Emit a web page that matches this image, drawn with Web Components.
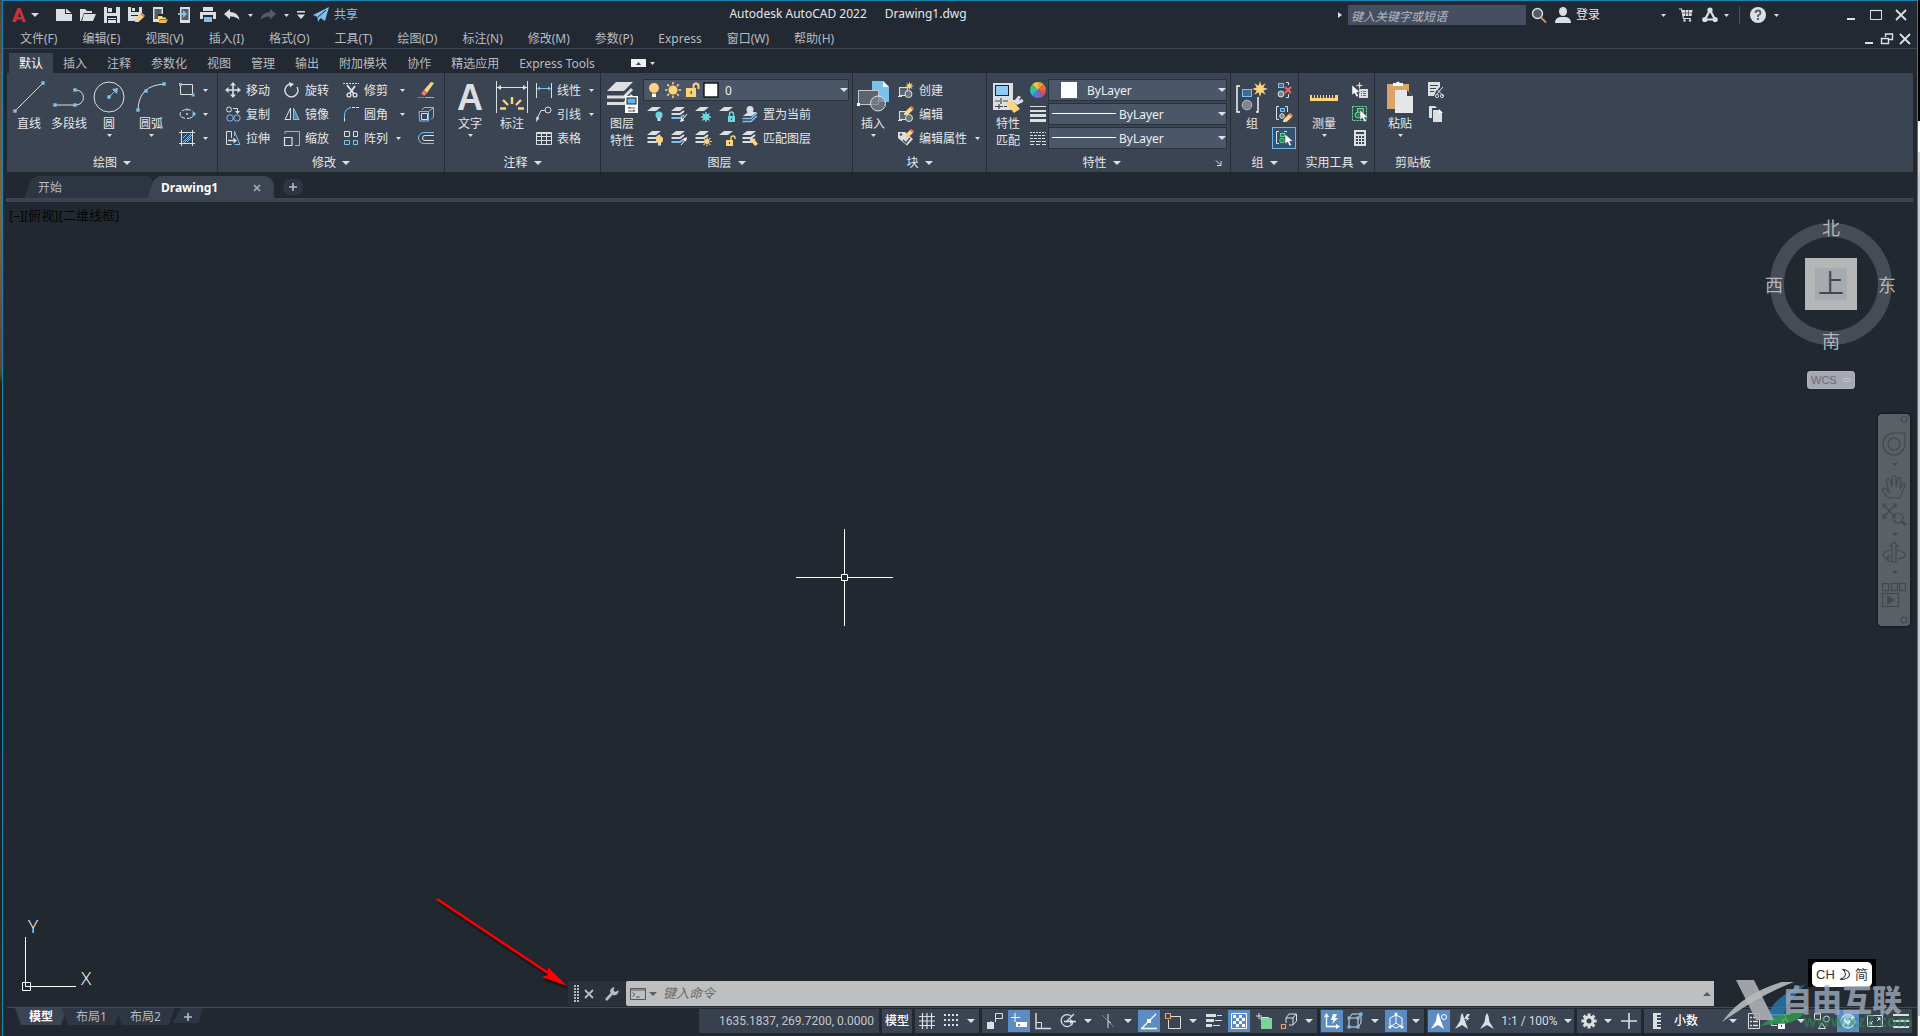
<!DOCTYPE html>
<html lang="zh-CN">
<head>
<meta charset="utf-8">
<title>Autodesk AutoCAD 2022 - Drawing1.dwg</title>
<style>
  html, body { height: 100%; }
  body {
    margin: 0; overflow: hidden; display: grid; grid-template-columns: 2px 1fr 2px;
    font: 12px/16px "Noto Sans", "Noto Sans CJK SC", sans-serif; color: #d3d7da; background: #0c0f13;
  }
  .edge-l { background: linear-gradient(#51463f 0, #6d5445 8%, #8a6040 20%, #5c4230 36%, #2c2119 37%, #14181c 60%, #2b2a24 100%); }
  .edge-r { background: linear-gradient(#000 0 121px, #fff 121px 152px, #d4d4d6 152px 172px, #c5cad3 172px 1016px, #fff 1016px); }
</style>
</head>
<body>
<div class="edge-l"></div>
<cad-app>
  <title-bar></title-bar>
  <menu-bar></menu-bar>
  <ribbon-tabs></ribbon-tabs>
  <cad-ribbon>
    <ribbon-panel label="绘图" caret style="--pad:2px">
      <tool-button icon="line">直线</tool-button>
      <tool-button icon="pline">多段线</tool-button>
      <tool-button icon="circle" caret>圆</tool-button>
      <tool-button icon="arc" caret style="--w:44px">圆弧</tool-button>
      <tool-column style="--w:44px;--pl:6px">
        <mini-button icon="rect" name="矩形" caret></mini-button>
        <mini-button icon="ellipse" name="椭圆" caret></mini-button>
        <mini-button icon="hatch" name="图案填充" caret></mini-button>
      </tool-column>
    </ribbon-panel>
    <ribbon-panel label="修改" caret style="--pad:7px">
      <tool-column style="--w:59px">
        <mini-button icon="move">移动</mini-button>
        <mini-button icon="copy">复制</mini-button>
        <mini-button icon="stretch">拉伸</mini-button>
      </tool-column>
      <tool-column style="--w:59px">
        <mini-button icon="rotate">旋转</mini-button>
        <mini-button icon="mirror">镜像</mini-button>
        <mini-button icon="scale">缩放</mini-button>
      </tool-column>
      <tool-column style="--w:75px">
        <mini-button icon="trim" caret style="--cg:12px">修剪</mini-button>
        <mini-button icon="fillet" caret style="--cg:12px">圆角</mini-button>
        <mini-button icon="array" caret>阵列</mini-button>
      </tool-column>
      <tool-column style="--w:26px">
        <mini-button icon="erase" name="删除"></mini-button>
        <mini-button icon="explode" name="分解"></mini-button>
        <mini-button icon="offset" name="偏移"></mini-button>
      </tool-column>
    </ribbon-panel>
    <ribbon-panel label="注释" caret style="--pad:4px">
      <tool-button icon="text" caret style="--w:42px">文字</tool-button>
      <tool-button icon="dim" style="--w:42px">标注</tool-button>
      <tool-column style="--w:67px;--pl:3px">
        <mini-button icon="linear" caret>线性</mini-button>
        <mini-button icon="leader" caret>引线</mini-button>
        <mini-button icon="table">表格</mini-button>
      </tool-column>
    </ribbon-panel>
    <ribbon-panel label="图层" caret style="--pad:1px">
      <tool-button icon="layers" >图层<br>特性</tool-button>
      <tool-column style="--w:210px;--pl:1px">
        <combo-box name="图层" value="0" style="--w:206px;--ind:2px;--tg:6px">
          <cad-icon name="bulb"></cad-icon><cad-icon name="sun"></cad-icon><cad-icon name="unlock"></cad-icon><cad-icon name="swatch"></cad-icon>
        </combo-box>
        <tool-row>
          <mini-button icon="lyoff" name="关" box></mini-button>
          <mini-button icon="lyiso" name="隔离" box></mini-button>
          <mini-button icon="lyfrz" name="冻结" box></mini-button>
          <mini-button icon="lylck" name="锁定" box></mini-button>
          <mini-button icon="lycur" style="--ml:3px">置为当前</mini-button>
        </tool-row>
        <tool-row>
          <mini-button icon="lyon" name="打开所有图层" box></mini-button>
          <mini-button icon="lyuni" name="取消隔离" box></mini-button>
          <mini-button icon="lythw" name="解冻所有图层" box></mini-button>
          <mini-button icon="lyulk" name="解锁" box></mini-button>
          <mini-button icon="lymch" style="--ml:3px">匹配图层</mini-button>
        </tool-row>
      </tool-column>
    </ribbon-panel>
    <ribbon-panel label="块" caret style="--pad:0px">
      <tool-button icon="insert" caret>插入</tool-button>
      <tool-column style="--w:93px;--pl:5px">
        <mini-button icon="bcreate">创建</mini-button>
        <mini-button icon="bedit">编辑</mini-button>
        <mini-button icon="battr" caret>编辑属性</mini-button>
      </tool-column>
    </ribbon-panel>
    <ribbon-panel label="特性" caret launcher style="--pad:1px">
      <tool-button icon="match">特性<br>匹配</tool-button>
      <tool-column style="--w:20px;--pl:2px">
        <mini-button icon="wheel" name="对象颜色"></mini-button>
        <mini-button icon="lweights" name="线宽"></mini-button>
        <mini-button icon="ltypes" name="线型"></mini-button>
      </tool-column>
      <tool-column style="--w:182px">
        <combo-box name="颜色" value="ByLayer" style="--w:179px;--ind:12px;--tg:10px"><cad-icon name="white"></cad-icon></combo-box>
        <combo-box name="线宽" value="ByLayer" style="--w:179px;--ind:3px;--tg:3px"><cad-icon name="sample"></cad-icon></combo-box>
        <combo-box name="线型" value="ByLayer" style="--w:179px;--ind:3px;--tg:3px"><cad-icon name="sample"></cad-icon></combo-box>
      </tool-column>
    </ribbon-panel>
    <ribbon-panel label="组" caret style="--pad:1px">
      <tool-button icon="group">组</tool-button>
      <tool-column style="--w:26px">
        <mini-button icon="ungroup" name="解除编组" box></mini-button>
        <mini-button icon="gedit" name="组编辑" box></mini-button>
        <mini-button icon="gsel" name="启用/禁用组选择" box active></mini-button>
      </tool-column>
    </ribbon-panel>
    <ribbon-panel label="实用工具" caret style="--pad:4px">
      <tool-button icon="ruler" caret style="--w:42px">测量</tool-button>
      <tool-column style="--w:29px;--pl:7px">
        <mini-button icon="qselect" name="快速选择"></mini-button>
        <mini-button icon="selall" name="全部选择"></mini-button>
        <mini-button icon="calc" name="快速计算器"></mini-button>
      </tool-column>
    </ribbon-panel>
    <ribbon-panel label="剪贴板" last style="--pad:4px">
      <tool-button icon="paste" caret style="--w:42px">粘贴</tool-button>
      <tool-column style="--w:30px;--pl:7px">
        <mini-button icon="cut" name="剪切"></mini-button>
        <mini-button icon="copyclip" name="复制裁剪"></mini-button>
      </tool-column>
    </ribbon-panel>
  </cad-ribbon>
  <file-tabs></file-tabs>
  <drawing-area></drawing-area>
  <footer-bar><layout-tabs></layout-tabs><status-bar></status-bar></footer-bar>
  <site-mark></site-mark>
</cad-app>
<div class="edge-r"></div>

<script>
const W = '#dcdfe1', B = '#7cc0ee', Y = '#fdd37c', D = '#3b4453', G = '#7d8590', T = '#6fd8df';
const sq = (x, y, s = 3, c = B) => `<rect x="${x - s / 2}" y="${y - s / 2}" width="${s}" height="${s}" fill="${c}"/>`;
const ln = (d, c = W, w = 1, x = '') => `<path d="${d}" fill="none" stroke="${c}" stroke-width="${w}" ${x}/>`;
const fl = (d, c = W, x = '') => `<path d="${d}" fill="${c}" ${x}/>`;
const sheet = (x, y, c = W) => fl(`M${x + 5} ${y}H${x + 14}L${x + 9} ${y + 4}H${x}Z`, c);
const stack = (c1 = W, c2 = W, c3 = W) => sheet(0, 1, c1) + ln('M0.5 8H9L13 5', c2, 2) + ln('M0.5 12H9L13 9', c3, 2);
const cursor = (x, y) => `<path transform="translate(${x} ${y})" d="M0 0V10L2.500 8L4.500 12L6.500 11L4.500 7.300H8Z" fill="#fff" stroke="${D}" stroke-width=".5"/>`;
const pencil = (x, y) => `<g transform="translate(${x} ${y})"><path d="M0 8L1 5L6 0L9 3L3.500 8Z" fill="${Y}"/><path d="M6 0L9 3L10 2Q9-.5 7-1Z" fill="#f0786e"/><path d="M0 8L1 5L3 7.500Z" fill="${W}"/></g>`;
const pie = (cx, cy, r, cols) => cols.map((c, i) => {
  const a = (i / cols.length) * 2 * Math.PI - Math.PI / 2, b = ((i + 1) / cols.length) * 2 * Math.PI - Math.PI / 2;
  return fl(`M${cx} ${cy}L${(cx + r * Math.cos(a)).toFixed(2)} ${(cy + r * Math.sin(a)).toFixed(2)}A${r} ${r} 0 0 1 ${(cx + r * Math.cos(b)).toFixed(2)} ${(cy + r * Math.sin(b)).toFixed(2)}Z`, c);
}).join('');
const rays = (cx, cy, r1, r2, n, c, w = 1) => ln(Array.from({ length: n }, (_, i) => {
  const a = i * 2 * Math.PI / n;
  return `M${(cx + r1 * Math.cos(a)).toFixed(2)} ${(cy + r1 * Math.sin(a)).toFixed(2)}L${(cx + r2 * Math.cos(a)).toFixed(2)} ${(cy + r2 * Math.sin(a)).toFixed(2)}`;
}).join(''), c, w);
const star = (cx, cy, R, r, n, c) => fl('M' + Array.from({ length: 2 * n }, (_, i) => {
  const a = i * Math.PI / n - Math.PI / 2, q = i % 2 ? r : R;
  return `${(cx + q * Math.cos(a)).toFixed(2)} ${(cy + q * Math.sin(a)).toFixed(2)}`;
}).join('L') + 'Z', c);
const padlock = (x, y, c, open) => `<rect x="${x}" y="${y}" width="7" height="6" fill="${c}"/>` + ln(open ? `M${x + 5} ${y}V${y - 2}A2 2 0 0 1 ${x + 9} ${y - 2}V${y - 1}` : `M${x + 1.5} ${y}V${y - 2}A2 2 0 0 1 ${x + 5.5} ${y - 2}V${y}`, c, 1.4) + `<rect x="${x + 3}" y="${y + 2}" width="1" height="2" fill="${D}"/>`;
const bulb = (x, y, c) => `<circle cx="${x}" cy="${y}" r="3.500" fill="${c}"/><rect x="${x - 1.5}" y="${y + 3}" width="3" height="3" fill="${W}"/>`;

const ICONS = {
  caret: [5, 3, fl('M0 0H5L2.500 3Z')],
  caret8: [8, 4, fl('M0 0H8L4 4Z')],
  caretup: [8, 4, fl('M0 4H8L4 0Z', '#5b5e61')],
  line: [32, 32, ln('M2 30L30 2') + sq(2, 30, 3.4) + sq(30, 2, 3.4)],
  pline: [32, 32, ln('M2 24H23A7.500 7.500 0 0 0 23 9') + sq(2, 24, 3.4) + sq(22, 24, 3.4) + sq(22, 9, 3.4)],
  circle: [32, 32, `<circle cx="16" cy="16" r="15" fill="none" stroke="${W}"/>` + ln('M16 16L24 8', B) + fl('M19 8L25 7L24 13Z', B) + sq(16, 16, 3.4)],
  arc: [32, 32, ln('M3 30Q3 4 30 3') + sq(3, 29, 3.4) + sq(11, 10, 3.4) + sq(29, 3, 3.4)],
  rect: [16, 16, ln('M1.500 2.500H13.500V12.500H1.500Z') + sq(1.5, 2.5) + sq(14, 13)],
  ellipse: [16, 16, `<ellipse cx="8" cy="8" rx="7" ry="4.500" fill="none" stroke="${W}" stroke-dasharray="9 2"/>` + sq(8, 8, 2) + sq(15, 8) + sq(8, 3.5, 2)],
  hatch: [16, 16, ln('M2.500 0V16M13.500 0V16M0 2.500H16M0 13.500H16') + ln('M4 8L8 4M4 12L12 4M8 12L12 8M5 13L13 5', B)],
  move: [16, 16, ln('M8 2V14M2 8H14', W, 1.6) + fl('M8 0L11 3.500H5ZM8 16L11 12.500H5ZM0 8L3.500 5V11ZM16 8L12.500 5V11Z')],
  copy: [16, 16, `<circle cx="4" cy="3.500" r="2.500" fill="none" stroke="${W}"/><circle cx="5" cy="12" r="3.200" fill="none" stroke="${B}"/><circle cx="12" cy="12" r="3.200" fill="none" stroke="${B}"/>` + ln('M8 2.500H12.500V6') + fl('M10 5H15L12.500 8Z')],
  stretch: [16, 16, ln('M6.500 14.500H1.500V1.500H6.500V8', W) + ln('M9.500 1.500L15 14.500H9.500', B) + ln('M3 10.500H10', W, 1.4) + fl('M8.500 7.500L12 10.500L8.500 13.500Z') + ln('M9.500 1V6', B)],
  rotate: [16, 16, ln('M6 2A6.500 6.500 0 1 0 13 5', W, 1.4) + fl('M5 0L10 2L6 5.500Z')],
  mirror: [16, 16, ln('M6.500 2V13.500H1Z') + fl('M9 1L15.500 14H9Z', '#4d84b0') + ln('M9.500 2L15 13.500H9.500Z', B)],
  scale: [16, 16, ln('M1 4V1.500H15.500V15.500H11', B) + ln('M.500 7.500H8V15.500H.500Z', W, 1.2)],
  trim: [16, 16, ln('M0 1.500H16', W, 1, 'stroke-dasharray="2 1"') + ln('M4 3L11 12M12 4L7 11', W, 2) + `<circle cx="6" cy="13" r="1.900" fill="none" stroke="${W}" stroke-width="1.400"/><circle cx="12" cy="13" r="1.900" fill="none" stroke="${W}" stroke-width="1.400"/>`],
  fillet: [16, 16, ln('M1.500 12V9Q1.500 3 8 1.500', B) + ln('M9 1.500H12M13 1.500H16M1.500 12V15.500')],
  array: [16, 16, ln('M1.500 1.500H6.500V6.500H1.500ZM10.500 1.500H14.500V6.500H10.500Z') + ln('M1.500 10.500H6.500V14.500H1.500ZM10.500 10.500H14.500V14.500H10.500Z', B)],
  erase: [16, 16, fl('M6 8L13 0L16 1L9 11Z', Y) + fl('M6 8L9 11L7 13.500Q4 14 3.500 11Z', '#f0786e') + ln('M0 15.500H6', '#e0604f') + ln('M7 15.500H16', B)],
  explode: [16, 16, ln('M1 5.500H10.500V15H1.500ZM4 4L6 1.500H15.500V11L13 13.500M11 5L15 2', B) + ln('M3.500 7.500H9.500V13.500H3.500Z')],
  offset: [16, 16, ln('M16 2.500H6A5.500 5.500 0 0 0 6 13.500H16', B) + ln('M16 5.500H7A2.500 2.500 0 0 0 7 10.500H16')],
  text: [32, 32, `<text x="16" y="29" text-anchor="middle" font-family="Liberation Sans, sans-serif" font-weight="700" font-size="36" fill="${W}">A</text>`],
  dim: [32, 32, ln('M.500 0V32M31.500 0V32M1 6.500H31') + fl('M1 6.500L5 4V9ZM31 6.500L27 4V9Z') + ln('M16 16V23M7 19L12 24M25 19L20 24M4 27.500H10M28 27.500H22', Y, 2.4)],
  linear: [16, 16, ln('M.500 1V16M15.500 1V16') + ln('M1 6.500H15', B) + fl('M1 6.500L4 4.500V8.500ZM15 6.500L12 4.500V8.500Z', B)],
  leader: [16, 16, `<circle cx="12" cy="4" r="3" fill="none" stroke="${W}"/>` + ln('M9 4.500H5L1 13') + fl('M0 16L.500 10.500L3.500 12Z')],
  table: [16, 16, ln('M.500 2.500H15.500V14.500H.500ZM.500 6.500H15.500M.500 10.500H15.500M5.500 3V14M10.500 3V14') + ln('M1 3.500H15', W, 1)],
  layers: [32, 32, fl('M10 1H27L18 10H1Z') + ln('M1 16H18L26 8', W, 3) + ln('M1 22.500H18L26 14', W, 3) + '<rect x="19" y="15" width="13" height="17" fill="#fff"/><rect x="21" y="17" width="9" height="6" fill="#5db4f5" stroke="#222"/>' + ln('M22 27H29M24 26L22 27M22 30H29M27 29L29 30', '#555')],
  bulb: [16, 16, `<circle cx="8" cy="6" r="5" fill="${Y}"/><rect x="6" y="10" width="4" height="3" fill="#e8a33c"/><rect x="6" y="12" width="4" height="3" fill="#fff"/>`],
  sun: [16, 16, `<circle cx="8" cy="8" r="4.500" fill="${Y}"/>` + rays(8, 8, 5.5, 8, 8, Y, 1.6)],
  unlock: [16, 16, `<rect x="2" y="6" width="10" height="9" fill="${Y}"/>` + ln('M9.500 6V4A2.500 2.500 0 0 1 14.500 4V7', Y, 2) + `<rect x="6.500" y="9" width="1.500" height="3" fill="#7a5a20"/>`],
  swatch: [16, 16, '<rect x="1" y="1" width="14" height="14" fill="#fff" stroke="#111" stroke-width="1.400"/>'],
  white: [16, 16, '<rect width="16" height="16" fill="#fff"/>'],
  sample: [64, 2, '<rect width="64" height="1" fill="#fff"/>'],
  lyoff: [16, 16, sheet(0, 1) + bulb(12, 9, T)],
  lyiso: [16, 16, stack(W, W, B) + ln('M16 8L11 14', '#fff') + fl('M9 16L10.500 11.500L13.500 14.500Z', '#fff')],
  lyfrz: [16, 16, sheet(0, 1) + rays(11, 11, 0, 5, 8, T, 1.3) + `<circle cx="11" cy="11" r="3" fill="none" stroke="${T}"/>`],
  lylck: [16, 16, sheet(0, 1) + padlock(9, 10, T)],
  lycur: [16, 16, sheet(1, 6, W) + ln('M.500 12.500H9L15 7', B, 1.6) + ln('M.500 15.500H9L15 10', B, 1.6) + `<circle cx="8" cy="3.500" r="3.500" fill="${W}"/>`],
  lyon: [16, 16, stack() + bulb(12.5, 9.5, Y)],
  lyuni: [16, 16, stack(W, W, B) + ln('M10 15L15 9', '#fff') + fl('M16 7L12 9L15 11.500Z', '#fff')],
  lythw: [16, 16, stack() + `<circle cx="12" cy="11.500" r="2.500" fill="${Y}"/>` + rays(12, 11.5, 3, 4.8, 8, Y, 1.2)],
  lyulk: [16, 16, sheet(0, 1) + padlock(7, 10, Y, 1)],
  lymch: [16, 16, stack() + fl('M8 10L12 9L16 14L13 16Z', Y) + fl('M7 8L9 7L12 9.500L9 11Z')],
  insert: [32, 32, fl('M15 0H26L32 6V21H15Z', B) + fl('M26 0V6H32Z', '#fff') + '<rect x="1.500" y="9.500" width="20" height="14" fill="#5c646f" stroke="#c3c7cb"/>' + '<circle cx="21" cy="22.500" r="7.500" fill="#7a828d" fill-opacity=".7" stroke="#dfe2e4"/>' + '<rect x="0" y="22" width="3" height="3" fill="#fff"/>'],
  bcreate: [16, 16, '<rect x="1.500" y="5.500" width="8" height="8" fill="#5c646f" stroke="#dcdfe1"/><circle cx="10.500" cy="12" r="3.500" fill="#6b737e" stroke="#dcdfe1"/>' + ln('M0 14.500H4') + star(11.5, 4, 4.5, 1.8, 8, Y)],
  bedit: [16, 16, '<rect x="1.500" y="5.500" width="8" height="8" fill="#5c646f" stroke="#dcdfe1"/><circle cx="11" cy="12" r="3.500" fill="#6b737e" stroke="#dcdfe1"/>' + ln('M0 14.500H4') + pencil(6, 1)],
  battr: [16, 16, fl('M0 2H7L15 9L9 15.500L0 8Z') + '<circle cx="3" cy="4.500" r="1.200" fill="#3b4453"/>' + ln('M5 10L8 13L12 8', D, 1.3) + pencil(6, 0)],
  match: [32, 32, '<rect x="1" y="2" width="20" height="27" fill="#dcdfe1"/><rect x="3.500" y="4.500" width="13" height="10" fill="#8ccbf8" stroke="#222"/>' + ln('M3 20H8M11 20H16M9 17V23M3 25.500H11M7 23V28M12 25.500H15', '#444', 1.2) + fl('M14 22L20 19L28 28L22 32Z', Y) + fl('M19 19L25 24L31 21Q32 18 29 18Q28 20 27 19L29 16Q28 15 26 15L23 19Z')],
  wheel: [16, 16, pie(8, 8, 8, ['#e8a13a', '#e86a3a', '#e0504a', '#8a5ad0', '#4a7be0', '#38b6c8', '#3fc46a', '#f2c53a'])],
  lweights: [16, 16, fl('M0 0H16V1H0ZM0 4H16V6H0ZM0 8H16V11H0ZM0 13H16V16H0Z')],
  ltypes: [16, 16, ln('M0 2.500H16', W, 1, 'stroke-dasharray="2 1"') + ln('M0 5.500H16M0 8.500H16', W, 1, 'stroke-dasharray="3 1"') + ln('M0 11.500H16', W, 1, 'stroke-dasharray="5 1"') + ln('M0 14.500H16', W, 1, 'stroke-dasharray="4 2"')],
  group: [32, 32, ln('M4 5H1V31H4M20 31H22V16', '#fff', 1.4) + '<rect x="6.500" y="8.500" width="9" height="7" fill="#3f6a92" stroke="#7cc0ee"/><circle cx="11" cy="24" r="4.800" fill="#7d8590" stroke="#b9bdc1"/>' + star(24, 8, 8, 3.6, 8, Y)],
  ungroup: [16, 16, '<rect x="2.500" y="1.500" width="5" height="4" fill="#3f6a92" stroke="#7cc0ee"/><circle cx="5" cy="12" r="3" fill="#7d8590" stroke="#dcdfe1"/>' + ln('M10 .500H12.500V3M12.500 12V15.500H10') + ln('M9 5L15 11M15 5L9 11', '#f0646a', 2)],
  gedit: [16, 16, ln('M3 .500H.500V13.500H3M9 .500H11.500V6') + '<rect x="4.500" y="2.500" width="4" height="3" fill="#3f6a92" stroke="#7cc0ee"/><circle cx="6" cy="10" r="2.300" fill="#7d8590" stroke="#dcdfe1"/>' + pencil(7, 8)],
  gsel: [16, 16, ln('M3 1.500H.500V13.500H3M8 1.500H11') + '<rect x="4.500" y="3.500" width="4" height="3" fill="#2f7a55" stroke="#5fd88f"/><circle cx="6" cy="10.500" r="2.300" fill="#2f7a55" stroke="#5fd88f"/>' + cursor(9, 4)],
  ruler: [32, 32, fl('M2 14H4V17H6V14H7V17H9V14H10V17H12V14H13V17H15V14H16V17H18V14H19V17H21V14H22V17H24V14H25V17H27V14H30V20H2Z', Y)],
  qselect: [16, 16, '<rect x="7" y="7" width="9" height="9" fill="#dcdfe1"/>' + ln('M9 9.500H10M11 9.500H14M9 11.500H10M11 11.500H14M9 13.500H10M11 13.500H14', '#3b78b0') + star(7.5, 3.500, 4, 1.2, 4, Y) + cursor(0, 3)],
  selall: [16, 16, ln('M.500 .500H14.500V14.500H.500Z', '#6fe09a', 1, 'stroke-dasharray="2 1"') + '<rect x="5.500" y="2.500" width="6" height="7" fill="#2f7a55" stroke="#5fd88f"/><circle cx="6" cy="9" r="3" fill="#2f7a55" stroke="#5fd88f"/>' + cursor(8, 4)],
  calc: [16, 16, '<rect x="2" y="0" width="12" height="16" fill="#dcdfe1"/><rect x="4" y="2" width="8" height="2" fill="#3b4453"/>' + [0, 1, 2].map(i => [0, 1, 2].map(j => `<rect x="${4 + 3 * i}" y="${6 + 3 * j}" width="2" height="2" fill="#3b4453"/>`).join('')).join('')],
  paste: [32, 32, '<rect x="3" y="3" width="22" height="25" fill="#d9a566"/>' + fl('M9 2H12Q14-1 16 2H19V5H9Z', '#fff') + fl('M11 9H23L29 15V32H11Z', '#e4e6e8') + fl('M23 9V15H29Z', D)],
  cut: [16, 16, fl('M0 0H12V5L8 9L6 14H0Z') + ln('M2 3.500H10M2 6.500H8M2 9.500H6', D) + ln('M8 6L15 14M15 5L8 13') + `<circle cx="9" cy="14" r="1.600" fill="none" stroke="${W}"/><circle cx="14" cy="14" r="1.600" fill="none" stroke="${W}"/>`],
  copyclip: [16, 16, fl('M1 0H7L9 2H4V12H1Z') + fl('M5 4H11L14 7V16H5Z') + fl('M11 3V7H15Z', '#fff')],
  launcher: [6, 6, ln('M0 .500L4 4.500M5 1V5.500H1')],
  logo: [14, 14, fl('M0 14L5.500 0H8.500L14 14H10.500L9.800 11.500H5L4 14ZM6 9H9L7.300 4.500Z', '#c8313a', 'fill-rule="evenodd"')],
  qnew: [16, 16, fl('M0 2H9V7H16V14H0Z') + fl('M10 1.500L15.500 6H10Z')],
  qopen: [16, 16, fl('M0 2H5L7 4H12V6H4L1 14H0Z') + fl('M4 7H16L13 14H2Z')],
  qsave: [16, 16, fl('M0 0H16V16H0Z') + fl('M3 0H12V6H3ZM3 9H13V16H3Z', '#222933') + fl('M4 1H8V5H4ZM4 11H12V12H4ZM4 13H12V16H4Z')],
  qsaveas: [16, 16, fl('M0 0H14V6L7 14H0Z') + fl('M3 0H11V5H3ZM3 8H10V9H3Z', '#222933') + fl('M4 1H7V4H4Z') + pencil(7, 7)],
  qmob: [16, 16, fl('M1 0H11V7H6V15H1Z') + fl('M2.500 2H9.500V7H6V12H2.500Z', '#555d66') + fl('M6 9H10L11 10.500H14V12H8L7 15H6Z', Y) + fl('M8 12.500H16L14 16H6.500Z', '#e8b85c')],
  qmobsave: [16, 16, fl('M4 0H14V16H4Z') + fl('M5.500 2H12.500V13H5.500Z', '#555d66') + ln('M2 7H8', B, 2) + fl('M7 3L11 7L7 11Z', B)],
  print: [16, 16, fl('M3 0H13V4H3ZM0 5H16V12H0Z') + fl('M3 9H13V16H3Z', '#222933') + fl('M4 10H12V15H4Z', B) + fl('M3 8H13V9H3Z', '#222933')],
  undo: [16, 16, fl('M0 7L6 2V5Q14 5 15.500 13Q12 9 6 9.500V12.500Z')],
  redo: [16, 16, fl('M16 7L10 2V5Q2 5 .500 13Q4 9 10 9.500V12.500Z', '#555c66')],
  custom: [8, 8, fl('M0 0H8V1.500H0ZM0 3.500H8L4 8Z')],
  plane: [16, 16, fl('M0 8L16 0L12 14L7.500 11L5 15L4.500 10Z', B) + ln('M5 10L13 3', '#222933')],
  tri: [4, 6, fl('M0 0L4 3L0 6Z')],
  search: [16, 16, `<circle cx="6.500" cy="6.500" r="5" fill="#555d66" stroke="${W}" stroke-width="1.400"/>` + ln('M10 10.500L15 15.500', '#b99668', 2)],
  user: [16, 16, `<ellipse cx="8" cy="4.500" rx="4" ry="4.500" fill="${W}"/>` + fl('M0 16Q0 11 5 10H11Q16 11 16 16Z')],
  cart: [14, 14, fl('M2.500 2H13.500L12.500 8H4Z') + ln('M0 1H2.500L4.500 10.500H12', W, 1.2) + `<circle cx="5.500" cy="12.500" r="1.200" fill="${W}"/><circle cx="11" cy="12.500" r="1.200" fill="${W}"/>` + ln('M6.500 2V8M9.500 2V8M3 5H13', '#222933', .6)],
  app: [16, 16, ln('M8 3L3 12.500H13Z', W, 2.2) + `<circle cx="8" cy="3" r="2.600" fill="${W}"/><circle cx="2.800" cy="12.500" r="2.600" fill="${W}"/><circle cx="13.200" cy="12.500" r="2.600" fill="${W}"/>`],
  help: [16, 16, `<circle cx="8" cy="8" r="8" fill="${W}"/>` + ln('M5.500 6Q5.500 3.500 8 3.500T10.500 6Q10.500 7.500 8 8.500V10', '#59616b', 1.8) + '<rect x="7" y="11" width="2" height="2" fill="#59616b"/>'],
  wmin: [12, 12, ln('M2 10H10', W, 2)],
  wmax: [12, 12, ln('M.500 1.500H11.500V10.500H.500Z') + ln('M0 1.500H12', W, 1.2)],
  wclose: [12, 12, ln('M1 1L11 11M11 1L1 11', W, 1.8)],
  wrest: [12, 12, ln('M4.500 4V1H11.500V6.500H8M.500 5.500H7.500V10.500H.500Z', W, 1.4)],
  rbmin: [15, 8, '<rect width="15" height="8" fill="#eef0f1"/>' + fl('M5 6H10L7.500 3Z', '#3b4453')],
  tclose: [8, 8, ln('M1 1L7 7M7 1L1 7', '#a8adb3', 1.6)],
  plus: [8, 8, ln('M4 0V8M0 4H8', '#b8bdc2', 1.6)],
  grip: [6, 18, [0, 1, 2, 3, 4, 5].map(i => `<rect y="${i * 3}" width="2" height="2" fill="#b4b7ba"/><rect x="3" y="${i * 3}" width="2" height="2" fill="#b4b7ba"/>`).join('')],
  cclose: [10, 10, ln('M1 1L9 9M9 1L1 9', '#b9bcc0', 1.8)],
  wrench: [14, 14, ln('M1 13L7 6.500', '#b9bcc0', 2.6) + fl('M5 5Q5 1 9.500 0L8.500 3.500L10.500 5L13.500 3Q14 8 8.500 8.500Z', '#b9bcc0')],
  term: [16, 12, ln('M.500 .500H15.500V11.500H.500ZM0 2H16', '#55585b') + ln('M2.500 4.500L5 6.500L2.500 8.500M6 9H10', '#55585b')],
  moon: [12, 14, ln('M4 1.500Q10 2 10.500 6.500Q10 11.500 1 11.500Q6 9.500 6.500 6.500Q6.500 3.500 4 1.500Z', '#333', 1.1)],
  sgrid: [16, 16, ln('M3.500 0V16M8 0V16M12.500 0V16M0 3.500H16M0 8H16M0 12.500H16', W, 1.2)],
  sdots: [14, 14, [0, 1, 2].map(i => [0, 1, 2, 3].map(j => `<rect x="${j * 4}" y="${i * 5}" width="2" height="2" fill="${W}"/>`).join('')).join('')],
  infer: [16, 16, fl('M0 9H7V16H0Z') + ln('M8.500 9V.500H15.500V5.500H9M4 9V8')],
  dyn: [16, 16, ln('M4 0V9M0 4.500H9', '#fff') + '<rect x="5.500" y="9.500" width="10" height="4" fill="#fff" stroke="#fff"/><rect x="7" y="11" width="2" height="2" fill="#5c8cc4"/>'],
  ortho: [16, 16, ln('M1 0V15.500H16', W, 1.4) + ln('M1 9.500H6.500V15')],
  polar: [16, 16, ln('M12 4A6 6 0 1 0 13 9M7 8L14 1M4 8.500H16', W, 1.3) + fl('M10 6L14 8.500L10 11Z')],
  iso: [16, 16, ln('M8 1V15') + ln('M2 2L8 8', '#cf6a6a') + ln('M8 8L14 14', '#cf6a6a') + ln('M8 8L11 10')],
  otrack: [16, 16, ln('M1 15L15 1M0 15.500H16', '#fff', 1.3) + '<rect x="6" y="6" width="4" height="4" fill="#fff"/>'],
  osnap: [16, 16, ln('M6 3.500H15.500V15.500H3.500V7') + ln('M.500 .500H5.500V5.500H.500Z', '#e7a06c', 1.2)],
  lwt: [16, 14, fl('M0 0H10V3H0ZM11 1H16V2H11ZM0 5H8V8H0ZM9 6H16V7H9ZM0 10H6V13H0ZM7 11H14V12H7Z')],
  transp: [16, 16, ln('M.500 .500H15.500V15.500H.500Z', '#fff') + [0, 1, 2, 3].map(i => [0, 1, 2, 3].map(j => (i + j) % 2 ? '' : `<rect x="${2 + i * 3}" y="${2 + j * 3}" width="3" height="3" fill="#fff"/>`).join('')).join('')],
  selcyc: [16, 16, ln('M3 0V6M0 3H6') + '<rect x="5" y="5" width="11" height="11" fill="#7fd39a"/>' + ln('M5 7V4.500H13', W)],
  snap3d: [16, 16, ln('M5 5L8 1H15.500V8L12 12H8M5 10V5H12V11M12 5L15 1') + ln('M.500 11.500H4.500V15.500H.500Z', '#e7a06c', 1.2)],
  dynucs: [16, 16, ln('M2.500 2V13.500H14', '#fff', 1.4) + fl('M2.500 0L5 4H0ZM16 13.500L12 11V16Z', '#fff') + fl('M9 1L7 7H9.500L8 11L14 5H11L13 1Z', '#fff')],
  filter: [16, 16, ln('M2 5H11V14H2ZM2 5L5 1H14V10L11 14M11 5L14 1') + sq(2, 5) + sq(11, 5) + sq(2, 14) + sq(11, 14) + sq(14, 1)],
  gizmo: [16, 16, ln('M8 1V10L2 14M8 10L14 14M2 8V5L8 2L14 5V12L8 15L2 12V8', '#fff') + [[8, 1], [2, 14], [14, 14]].map(p => `<circle cx="${p[0]}" cy="${p[1]}" r="1.500" fill="#fff"/>`).join('')],
  ann1: [16, 16, fl('M0 16L5 8L6 2L7.500 0L9 5L10 8L13 16L7 12Z', '#fff') + '<circle cx="13" cy="4" r="2.500" fill="none" stroke="#fff"/>'],
  ann2: [16, 16, fl('M0 16L5 8L6 2L7.500 0L9 5L10 8L13 16L7 12Z') + fl('M12 1L9 6H12L10 9L15 5H12.500L15 1Z')],
  ann3: [14, 16, fl('M0 16L4.500 9L5.500 3L7 0L8.500 3L9.500 9L14 16L7 12Z')],
  gear: [16, 16, rays(8, 8, 4, 7.6, 8, W, 3) + `<circle cx="8" cy="8" r="4" fill="none" stroke="${W}" stroke-width="3"/>`],
  bigplus: [16, 16, ln('M8 0V16M0 8H16', W, 1.6)],
  units: [8, 16, fl('M0 0H8V2H4V4H8V5H4V7H8V9H4V11H8V12H4V14H8V16H0Z')],
  qprops: [12, 16, ln('M.500 .500H11.500V15.500H.500Z') + ln('M2 4.500H4M5 4.500H10M2 8.500H4M5 8.500H10M2 12.500H4M5 12.500H10', W, 1.6)],
  slock: [16, 16, ln('M6 12.500H.500V1.500H14.500V5') + ln('M0 2H15', W, 1.6) + padlock(7, 10, '#fff', 1)],
  isolate: [16, 16, ln('M.500 .500H6.500V6.500H.500ZM4.500 15.500L8 10L11.500 15.500Z') + `<circle cx="12.500" cy="6" r="3" fill="none" stroke="${W}"/>`],
  hw: [16, 16, '<circle cx="8" cy="8" r="7" fill="#8dc3e6" stroke="#d8ecf8"/>' + ln('M3 6L8 10L13 4', '#e9f4fb', 1.6)],
  full: [16, 12, ln('M.500 .500H15.500V11.500H.500Z') + ln('M3 9L6 6M13 3L10 6') + fl('M2.500 9.500V6L6 9.500ZM13.500 2.500V6L10 2.500Z')],
  smenu: [16, 14, fl('M0 0H16V2H0ZM0 6H16V8H0ZM0 12H16V14H0Z')],
};
const svg = n => { const [w, h, m] = ICONS[n]; return `<svg width="${w}" height="${h}" viewBox="0 0 ${w} ${h}" aria-hidden="true">${m}</svg>`; };

const RESET = `*{box-sizing:border-box} svg{display:block;flex:none;overflow:visible}
button,a{font:inherit;color:inherit;background:none;border:0;padding:0;margin:0;text-decoration:none;white-space:nowrap;cursor:default;display:flex;align-items:center}`;
function define(tag, css, html) {
  customElements.define(tag, class extends HTMLElement {
    connectedCallback() {
      if (this.shadowRoot) return;
      const root = this.attachShadow({ mode: 'open' });
      const t = document.createElement('template');
      t.innerHTML = `<style>${RESET}${css}</style>${typeof html === 'function' ? html(this) : html}`;
      root.append(t.content.cloneNode(true));
    }
  });
}
const ib = (icon, label, cls = '') => `<button aria-label="${label}" class="${cls}">${svg(icon)}</button>`;

define('cad-icon', ':host{display:block;flex:none}', el => svg(el.getAttribute('name')));

define('cad-app', `:host{display:flex;flex-direction:column;min-width:0;height:100vh;box-sizing:border-box;position:relative;background:#212830;
  border:solid #1a84b4;border-width:1px 1px 0;overflow:hidden}`, '<slot></slot>');

define('title-bar', `:host{display:flex;align-items:center;height:28px;background:#222933;flex:none}
  .q{display:flex;align-items:center;padding-left:9px}
  .q button{width:24px;height:24px;justify-content:center}
  .q .c{width:12px}.q .logo{width:14px}.q .lc{width:18px}.q .gap{margin-left:8px}.q .g2{margin-left:3px}
  .share{gap:5px;color:#7cc0ee}.q .share{width:auto;margin-left:6px;justify-content:flex-start}
  h1{flex:1;margin:0;font-size:12px;font-weight:400;display:flex;gap:18px;justify-content:center;color:#e4e6e8;line-height:20px;padding-bottom:2px}
  .s{display:flex;align-items:center}
  input{width:178px;height:20px;margin:0 5px 0 6px;padding:0 3px;border:0;background:#464f61;font:italic 12px/18px "Noto Sans CJK SC",sans-serif;color:#fff}
  input::placeholder{color:#b5bac2;opacity:1}
  .user{gap:5px;margin-left:8px;color:#e4e6e8}
  .bar{width:1px;height:18px;background:#4a525e;margin:0 10px}
  .win{display:flex;margin-left:59px;padding-right:4px}
  .win button{width:25px;height:24px;justify-content:center}`,
  `<div class="q">${ib('logo', 'AutoCAD 菜单', 'logo')}${ib('caret8', '应用程序菜单', 'lc')}
   ${ib('qnew', '新建', 'gap')}${ib('qopen', '打开')}${ib('qsave', '保存')}${ib('qsaveas', '另存为')}${ib('qmob', '从 Web 和 Mobile 中打开')}${ib('qmobsave', '保存到 Web 和 Mobile')}${ib('print', '打印')}${ib('undo', '放弃')}${ib('caret', '放弃列表', 'c')}${ib('redo', '重做')}${ib('caret', '重做列表', 'c')}${ib('custom', '自定义快速访问工具栏', 'c g2')}
   <button class="share">${svg('plane')}<span>共享</span></button></div>
   <h1><span>Autodesk AutoCAD 2022</span><span>Drawing1.dwg</span></h1>
   <div class="s">${svg('tri')}<input aria-label="搜索" placeholder="键入关键字或短语">${ib('search', '搜索')}
   <button class="user">${svg('user')}<span>登录</span></button>
   <button aria-label="登录选项" style="margin:0 13px 0 61px">${svg('caret')}</button>${ib('cart', 'App Store')}
   <button aria-label="保持连接" style="margin-left:9px;gap:6px">${svg('app')}${svg('caret')}</button><span class="bar"></span>
   <button aria-label="帮助" style="gap:8px">${svg('help')}${svg('caret')}</button></div>
   <div class="win">${ib('wmin', '最小化')}${ib('wmax', '最大化')}${ib('wclose', '关闭')}</div>`);

define('menu-bar', `:host{display:flex;align-items:center;height:20px;background:#222933;border-bottom:1px solid #3b4453;flex:none;box-sizing:border-box;color:#b6bbc1}
  nav{display:flex;gap:25px;padding:1px 0 0 17px;flex:1}
  .win{display:flex;gap:6px;padding-right:6px}`,
  `<nav>${['文件(F)', '编辑(E)', '视图(V)', '插入(I)', '格式(O)', '工具(T)', '绘图(D)', '标注(N)', '修改(M)', '参数(P)', 'Express', '窗口(W)', '帮助(H)'].map(t => `<a href="#">${t}</a>`).join('')}</nav>
   <div class="win">${ib('wmin', '最小化图形')}${ib('wrest', '还原图形')}${ib('wclose', '关闭图形')}</div>`);

define('ribbon-tabs', `:host{display:flex;align-items:flex-end;height:24px;padding-left:6px;background:#222933;color:#b6bbc1;flex:none;box-sizing:border-box}
  button{height:20px;padding:2px 10px 0}
  .on{background:#3b4453;color:#fff}
  .m{padding:0;margin-left:26px;gap:4px}`,
  ['默认', '插入', '注释', '参数化', '视图', '管理', '输出', '附加模块', '协作', '精选应用', 'Express Tools'].map((t, i) => `<button class="${i ? '' : 'on'}">${t}</button>`).join('') +
  `<button class="m" aria-label="最小化功能区">${svg('rbmin')}${svg('caret')}</button>`);

define('cad-ribbon', ':host{display:flex;height:99px;margin:0 4px;background:#3b4453;color:#e3e6e8;flex:none}', '<slot></slot>');

define('ribbon-panel', `:host{display:flex;flex-direction:column;border-right:1px solid #262d38;box-sizing:border-box}
  :host([last]){border:0}
  .body{display:flex;height:78px;padding:5px 0 0 var(--pad)}
  .foot{display:flex;height:21px;align-items:center;padding-top:2px}
  .foot button{flex:1;justify-content:center;gap:6px}
  .foot .l{flex:none;width:14px;justify-content:flex-start}`,
  el => `<div class="body"><slot></slot></div><div class="foot"><button>${el.getAttribute('label')}${el.hasAttribute('caret') ? svg('caret8') : ''}</button>${el.hasAttribute('launcher') ? `<button class="l" aria-label="特性选项板">${svg('launcher')}</button>` : ''}</div>`);

define('tool-column', ':host{display:flex;flex-direction:column;width:var(--w);padding-left:var(--pl,0px);box-sizing:border-box}', '<slot></slot>');
define('tool-row', ':host{display:flex;height:24px}', '<slot></slot>');

define('tool-button', `:host{display:block;width:var(--w,40px)}
  button{flex-direction:column;width:100%;padding-top:3px;line-height:17px;text-align:center}
  .t{margin-top:2px}.c{margin-top:2px}`,
  el => `<button>${svg(el.getAttribute('icon'))}<span class="t"><slot></slot></span>${el.hasAttribute('caret') ? `<span class="c">${svg('caret')}</span>` : ''}</button>`);

define('mini-button', `:host{display:flex;height:24px;align-items:center;margin-left:var(--ml,0px)}
  .t{margin-left:5px;padding-top:2px}.c{margin-left:var(--cg,8px)}
  button{height:22px;border:1px solid transparent;border-width:1px 0}
  :host([box]) button{width:24px;justify-content:center;border-width:1px}
  :host([active]) button{border-color:#6fb7ea;background:#33536f}`,
  el => {
    const n = el.getAttribute('name');
    return `<button${n ? ` aria-label="${n}"` : ''}>${svg(el.getAttribute('icon'))}${n ? '' : '<span class="t"><slot></slot></span>'}${el.hasAttribute('caret') ? `<span class="c">${svg('caret')}</span>` : ''}</button>`;
  });

define('combo-box', `:host{display:flex;align-items:center;width:var(--w);height:22px;margin:1px 0;box-sizing:border-box;border:1px solid #29313d;background:#4b5669}
  .i{display:flex;gap:3px;padding-left:var(--ind,3px);align-items:center}
  select{appearance:none;border:0;background:none;font:inherit;color:#eef0f1;flex:1;min-width:0;height:20px;padding:2px 0 0 var(--tg,3px);margin:0}
  option{color:#000}`,
  el => `<span class="i"><slot></slot></span><select aria-label="${el.getAttribute('name')}"><option>${el.getAttribute('value')}</option></select>${svg('caret8')}`);

define('file-tabs', `:host{display:flex;align-items:flex-end;height:30px;border-bottom:4px solid #3d4553;padding-left:22px;margin:0 4px 0 3px;box-sizing:border-box;flex:none}
  .tab{position:relative;display:flex;align-items:center;height:22px;width:123px;padding:2px 13px 0 10px;color:#b6bbc1;z-index:0}
  .tab::before{content:"";position:absolute;z-index:-1;inset:0;background:#2e3643;border-radius:8px 8px 0 0;transform:skewX(-18deg)}
  .tab::after{content:"";position:absolute;z-index:-1;inset:0 0 0 50%;background:#2e3643;border-radius:0 8px 0 0}
  .on{color:#fff;font-weight:700;justify-content:space-between}
  .on::before{background:#3d4553;transform:none;border-radius:0 10px 0 0;inset:0 0 0 8px}
  .on::after{background:#3d4553;transform:skewX(-18deg);border-radius:8px 0 0 0;inset:0 50% 0 0}
  .add{margin:0 0 3px 9px;width:20px;height:16px;justify-content:center;background:#2e3643;border-radius:7px}`,
  `<button class="tab">开始</button><div class="tab on"><button>Drawing1</button>${ib('tclose', '关闭 Drawing1')}</div>${ib('plus', '新图形', 'add')}`);

define('view-cube', `:host{display:block;width:130px;color:#b3b5b7;font-size:18px}
  .ring{position:relative;width:122px;height:122px;margin:0 4px;box-sizing:border-box;border:14px solid #464c55;border-radius:50%;display:grid;place-items:center}
  .face{width:52px;height:52px;background:#b4b6b8;justify-content:center}
  .face span{width:32px;height:32px;background:#a5abb1;color:#46494c;font-size:26px;line-height:30px}
  .d{position:absolute;line-height:22px;width:18px}
  .n{top:-20px;left:38px}.s{bottom:-21px;left:38px}.w{left:-19px;top:37px}.e{right:-18px;top:37px}
  .wcs{margin:26px auto 0;width:48px;height:18px;border-radius:4px;background:#a5a8b0;box-shadow:inset 0 0 2px #d0d2d8;color:#686c74;font:11px/18px "Liberation Sans",sans-serif;padding-left:4px;gap:6px}
  .wcs i{width:8px;height:4px;border:1px solid #c3c6cc;border-radius:2px}`,
  `<div class="ring"><button class="face"><span>上</span></button><button class="d n">北</button><button class="d s">南</button><button class="d w">西</button><button class="d e">东</button></div>
   <button class="wcs">WCS<i></i></button>`);

define('nav-bar', ':host{display:block;border-radius:4px;background:#5a6066;box-shadow:0 0 2px 1px #161b21}', (() => {
  const s = (m) => `<g fill="none" stroke="#43484e" stroke-width="1.200">${m}</g>`;
  return `<svg width="32" height="212" viewBox="0 0 32 212" role="img" aria-label="导航栏">${s(`
   <circle cx="26" cy="5" r="3"/><circle cx="26" cy="206" r="3"/>
   <path d="M16 19H27V30A11 11 0 1 1 16 19Z"/><circle cx="16" cy="30" r="6"/>
   <path d="M9 83L4 76Q5 73 8 75L11 78L8 66Q10 63 12 66L14 73V63Q16 60 18 63V73L20 64Q22 62 23 65L22 75L25 69Q27 69 27 72L22 84H11Z"/>
   <path d="M5 90L18 104M18 90L5 104M5 94V90H9M14 90H18V94M5 100V104H9"/><circle cx="20" cy="104" r="5"/><path d="M24 108L28 111" stroke-width="2.500"/>
   <path d="M14 148V132H12L16 128L20 132H18V148ZM12 136Q5 138 5 141T12 145M19 136Q27 138 27 141T20 145M12 141L8 145L12 148"/>
   <rect x="4.500" y="169.500" width="6" height="7"/><rect x="13.500" y="169.500" width="6" height="7"/><rect x="21.500" y="169.500" width="6" height="7"/><rect x="4.500" y="179.500" width="16" height="13"/>`)}
   <path d="M9 181V191L17 186ZM14 49H20L17 52ZM14 119H20L17 122ZM14 157H20L17 160Z" fill="#43484e"/></svg>`;
})());

define('command-line', `:host{display:flex;height:25px;background:#2b303a}
  .h{display:flex;align-items:center;width:58px;padding-left:6px;gap:4px;flex:none}
  .h button:last-child{margin-left:7px}
  .f{flex:1;display:flex;align-items:center;background:#bebfc0;padding:0 3px 0 4px;border-radius:2px 0 0 2px;min-width:0}
  .f button{gap:3px}
  input{flex:1;min-width:0;border:0;background:none;padding:0 0 2px;margin-left:6px;height:24px;font:italic 13px/20px "Noto Sans CJK SC",sans-serif}
  input::placeholder{color:#68696b;opacity:1}`,
  `<div class="h">${svg('grip')}${ib('cclose', '关闭命令行')}${ib('wrench', '自定义')}</div>
   <div class="f"><button aria-label="最近使用的命令">${svg('term')}<svg width="8" height="4"><path d="M0 0H8L4 4Z" fill="#5b5e61"/></svg></button><input aria-label="命令" placeholder="键入命令">${ib('caretup', '命令历史')}</div>`);

define('drawing-area', `:host{display:block;position:relative;flex:1;min-height:0;background:#212830}
  .v{color:#050607;padding:5px 0 0 6px;font-size:13px;line-height:17px}
  svg.a,view-cube,nav-bar,command-line,.ime{position:absolute}
  .cross{left:793px;top:327px}.ucs{left:16px;bottom:14px}.red{left:430px;bottom:17px;filter:drop-shadow(2px 3px 1px #0009)}
  view-cube{right:21px;top:21px}nav-bar{right:7px;top:212px}
  command-line{left:565px;right:203px;bottom:1px}
  .ime{right:41px;bottom:20px;width:68px;height:28px;background:#000;padding:3px 4px 0}
  .ime div{height:25px;background:#fff;border-radius:5px;color:#333;font:13px/25px "Liberation Sans","Noto Sans CJK SC",sans-serif;display:flex;align-items:center;justify-content:center;gap:4px}`,
  `<div class="v">[–][俯视][二维线框]</div>
   <svg class="a cross" width="98" height="98"><path d="M0 48.500H45M52 48.500H97M48.500 0V45M48.500 52V97M45.500 45.500H51.500V51.500H45.500Z" fill="none" stroke="#fff"/></svg>
   <svg class="a ucs" width="84" height="80" font-family="Open Sans, Noto Sans, sans-serif" font-weight="300" font-size="19" fill="#fff"><path d="M6.500 24V65M11 73.500H57M3.500 69.500H11.500V77.500H3.500ZM6.500 65V73.500H11" fill="none" stroke="#fff"/><text x="9" y="20">Y</text><text x="62" y="72">X</text></svg>
   <svg class="a red" width="140" height="95"><path d="M4 4L118 80" stroke="#f00" stroke-width="2.500"/><path d="M134 91L109 82L115 80V72Z" fill="#f00"/></svg>
   <view-cube></view-cube><nav-bar></nav-bar>
   <div class="ime"><div><span>CH</span>${svg('moon')}<span>简</span></div></div>
   <command-line></command-line>`);

define('footer-bar', ':host{display:flex;height:29px;border-top:1px solid #454b54;flex:none;box-sizing:border-box;margin-left:4px;justify-content:space-between}', '<slot></slot>');

define('layout-tabs', `:host{display:flex;padding-left:11px;height:17px;gap:1px;color:#b6bbc1}
  button{position:relative;z-index:0;height:17px;padding:1px 11px 0}
  button::before{content:"";position:absolute;z-index:-1;inset:0 -3px;background:#2e3643;clip-path:polygon(0 0,100% 0,calc(100% - 6px) 100%,6px 100%)}
  .on{color:#fff;font-weight:700}.on::before{background:#3b4453}
  .p::before{inset:0;clip-path:polygon(8px 0,100% 0,calc(100% - 4px) 88%,0 88%)}`,
  `<button class="on">模型</button><button>布局1</button><button>布局2</button>${ib('plus', '新建布局', 'p')}`);

const cell = (icon, w, label, on) => `<button aria-label="${label}" style="width:${w}px"${on ? ' class="on"' : ''}>${svg(icon)}</button>`;
const cr = (w) => cell('caret8', w, '选项');
define('status-bar', `:host{display:flex;gap:3px;padding:1px 5px 0 0;height:26px;box-sizing:border-box;color:#d7dadd}
  .g{display:flex;background:#3b4453;height:24px}
  button{justify-content:center;height:24px}
  .on{background:#5c8cc4;border:1px solid #3b4453}
  .xy{width:180px;justify-content:flex-end;padding-right:5px;background:#383f4d;color:#c3c7cc;font-family:Roboto,sans-serif}
  .m{padding:0 3px;font-weight:500;color:#fff}
  .sc{width:75px;gap:6px;font-family:Roboto,sans-serif}
  .u{width:98px;padding:0 5px 0 9px;justify-content:flex-start;gap:13px;font-weight:500;color:#fff}.u span{flex:1;text-align:left}`,
  `<div class="g"><button class="xy">1635.1837, 269.7200, 0.0000</button></div>
   <div class="g"><button class="m">模型</button></div>
   <div class="g">${cell('sgrid', 23, '显示图形栅格')}${cell('sdots', 25, '捕捉模式')}${cr(16)}</div>
   <div class="g">${cell('infer', 25, '推断约束')}${cell('dyn', 24, '动态输入', 1)}${cell('ortho', 24, '正交')}${cell('polar', 25, '极轴追踪')}${cr(16)}${cell('iso', 23, '等轴测草图')}${cr(18)}${cell('otrack', 24, '对象捕捉追踪', 1)}${cell('osnap', 23, '对象捕捉')}${cr(17)}${cell('lwt', 26, '线宽')}${cell('transp', 24, '透明度', 1)}${cell('selcyc', 26, '选择循环')}${cell('snap3d', 24, '三维对象捕捉')}${cr(16)}</div>
   <div class="g">${cell('dynucs', 24, '动态 UCS', 1)}${cell('filter', 22, '选择过滤')}${cr(18)}${cell('gizmo', 24, '小控件', 1)}${cr(16)}</div>
   <div class="g">${cell('ann1', 24, '注释可见性', 1)}${cell('ann2', 24, '自动缩放')}${cell('ann3', 24, '注释比例')}<button class="sc">1:1 / 100%${svg('caret8')}</button></div>
   <div class="g">${cell('gear', 23, '切换工作空间')}${cr(16)}${cell('bigplus', 25, '注释监视器')}</div>
   <div class="g"><button class="u">${svg('units')}<span>小数</span>${svg('caret8')}</button>${cell('qprops', 23, '快捷特性')}${cell('slock', 28, '锁定用户界面')}${cr(15)}${cell('isolate', 28, '隔离对象')}${cell('hw', 24, '硬件加速', 1)}${cell('full', 30, '全屏显示')}${cell('smenu', 22, '自定义')}</div>`);

define('site-mark', `:host{position:absolute;right:4px;bottom:6px;width:195px;height:56px;pointer-events:none}
  svg{position:absolute;left:0;top:0}
  b{position:absolute;left:64px;top:11px;font:900 30px/26px "Noto Sans CJK SC",sans-serif;color:#a3adbdcc;white-space:nowrap}
  i{position:absolute;left:85px;top:39px;font:700 16px/16px "Noto Sans",sans-serif;color:#2d8a4f99}`,
  `<svg width="195" height="56" viewBox="0 0 195 56"><path d="M49 48Q50 24 88 10Q66 30 64 47Z" fill="#2a78b0" fill-opacity=".8"/><path d="M42 52Q56 40 80 37Q86 36 90 30Q86 47 66 50Q52 50 42 52Z" fill="#2f9a4a" fill-opacity=".8"/>
   <path d="M18 6H36L56 46H38Z" fill="#aaadb2" fill-opacity=".92"/><path d="M64 8H76Q44 20 4 48Q24 20 64 8Z" fill="#b5b8bc" fill-opacity=".92"/></svg>
   <i>www.xz7.com</i><b>自由互联</b>`);
</script>
</body>
</html>
